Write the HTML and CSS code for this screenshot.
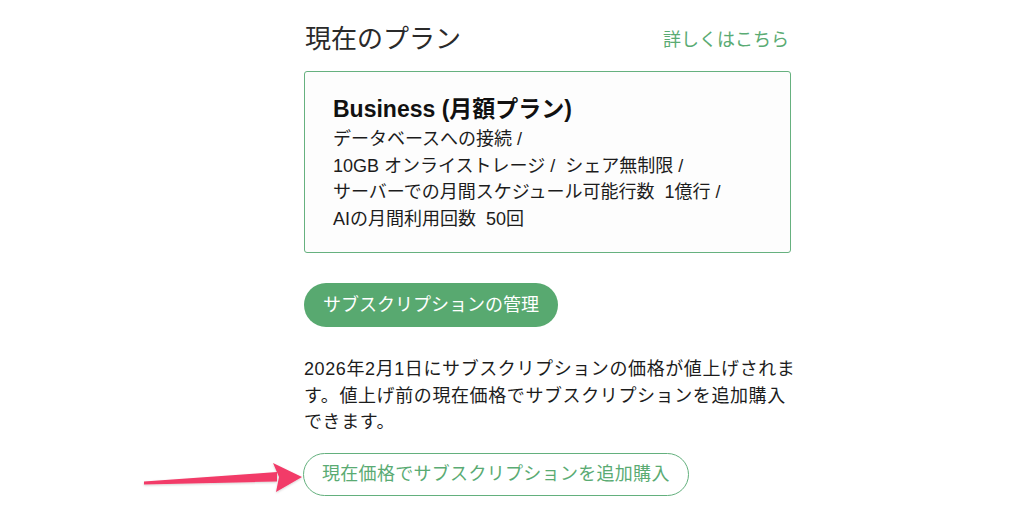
FILE: index.html
```html
<!DOCTYPE html>
<html lang="ja">
<head>
<meta charset="utf-8">
<title>現在のプラン</title>
<link rel="stylesheet" href="styles.css">
</head>
<body>
<main class="page">
  <header class="plan-header">
    <h1 class="plan-title">現在のプラン</h1>
    <a class="plan-link" href="#">詳しくはこちら</a>
  </header>
  <section class="plan-box">
    <h2 class="plan-name">Business (月額プラン)</h2>
    <p class="plan-line">データベースへの接続 /</p>
    <p class="plan-line">10GB オンライストレージ /&nbsp; シェア無制限 /</p>
    <p class="plan-line">サーバーでの月間スケジュール可能行数&nbsp; 1億行 /</p>
    <p class="plan-line">AIの月間利用回数&nbsp; 50回</p>
  </section>
  <div class="actions">
    <a class="btn btn-solid" href="#">サブスクリプションの管理</a>
  </div>
  <p class="notice">2026年2月1日にサブスクリプションの価格が値上げされます。値上げ前の現在価格でサブスクリプションを追加購入できます。</p>
  <div class="actions actions-second">
    <a class="btn btn-outline" href="#">現在価格でサブスクリプションを追加購入</a>
  </div>
</main>
<svg class="arrow" viewBox="0 0 1024 524" width="1024" height="524" aria-hidden="true">
  <defs>
    <filter id="sh" x="-10%" y="-50%" width="120%" height="200%">
      <feDropShadow dx="0" dy="1" stdDeviation="0.8" flood-color="#000" flood-opacity="0.18"/>
    </filter>
  </defs>
  <g filter="url(#sh)" fill="#f23b68">
    <polygon points="144,481.5 277,472 277,481.5 144,484.5"/>
    <polygon points="273,463 302,477 276,492 279,477"/>
  </g>
</svg>
</body>
</html>
```
FILE: styles.css
```css
html, body {
  margin: 0;
  padding: 0;
  background: #ffffff;
}

body {
  width: 1024px;
  height: 524px;
  overflow: hidden;
  position: relative;
  font-family: "Liberation Sans", "Noto Sans CJK JP", sans-serif;
  color: #1c1c1c;
}

.page {
  padding-left: 304px;
  width: 487px;
}

.plan-header {
  margin-top: 21px;
  height: 36px;
  display: flex;
  align-items: center;
  justify-content: space-between;
}

.plan-title {
  margin: 0;
  font-size: 26px;
  font-weight: normal;
  line-height: 36px;
  color: #2a2a2a;
  padding-left: 1px;
}

.plan-link {
  font-size: 18px;
  line-height: 24px;
  color: #5aab73;
  text-decoration: none;
  margin-right: 2px;
  margin-top: 2px;
}

.plan-box {
  margin-top: 14px;
  border: 1.5px solid #66b17f;
  border-radius: 3px;
  padding: 21px 28px 20px;
  background: #fdfdfd;
}

.plan-name {
  margin: 0;
  font-size: 23px;
  font-weight: bold;
  line-height: 33px;
  color: #111111;
}

.plan-line {
  margin: 0;
  font-size: 18px;
  line-height: 26.5px;
  color: #1c1c1c;
}

.actions {
  margin-top: 30px;
  display: flex;
}

.btn {
  display: inline-block;
  box-sizing: border-box;
  font-size: 18px;
  text-decoration: none;
  border-radius: 22px;
  white-space: nowrap;
}

.btn-solid {
  height: 44px;
  line-height: 44px;
  padding: 0 19px;
  background: #58a970;
  color: #ffffff;
}

.notice {
  margin: 29px 0 0;
  width: 497px;
  font-size: 18px;
  line-height: 26.5px;
  letter-spacing: 0.6px;
  color: #1c1c1c;
}

.actions-second {
  margin-top: 17px;
}

.btn-outline {
  height: 43px;
  line-height: 40px;
  padding: 0 18px;
  border: 1.5px solid #63b07d;
  color: #5aab73;
  background: #ffffff;
  letter-spacing: 0.3px;
  margin-left: -1px;
}

.arrow {
  position: absolute;
  left: 0;
  top: 0;
  pointer-events: none;
}
```
